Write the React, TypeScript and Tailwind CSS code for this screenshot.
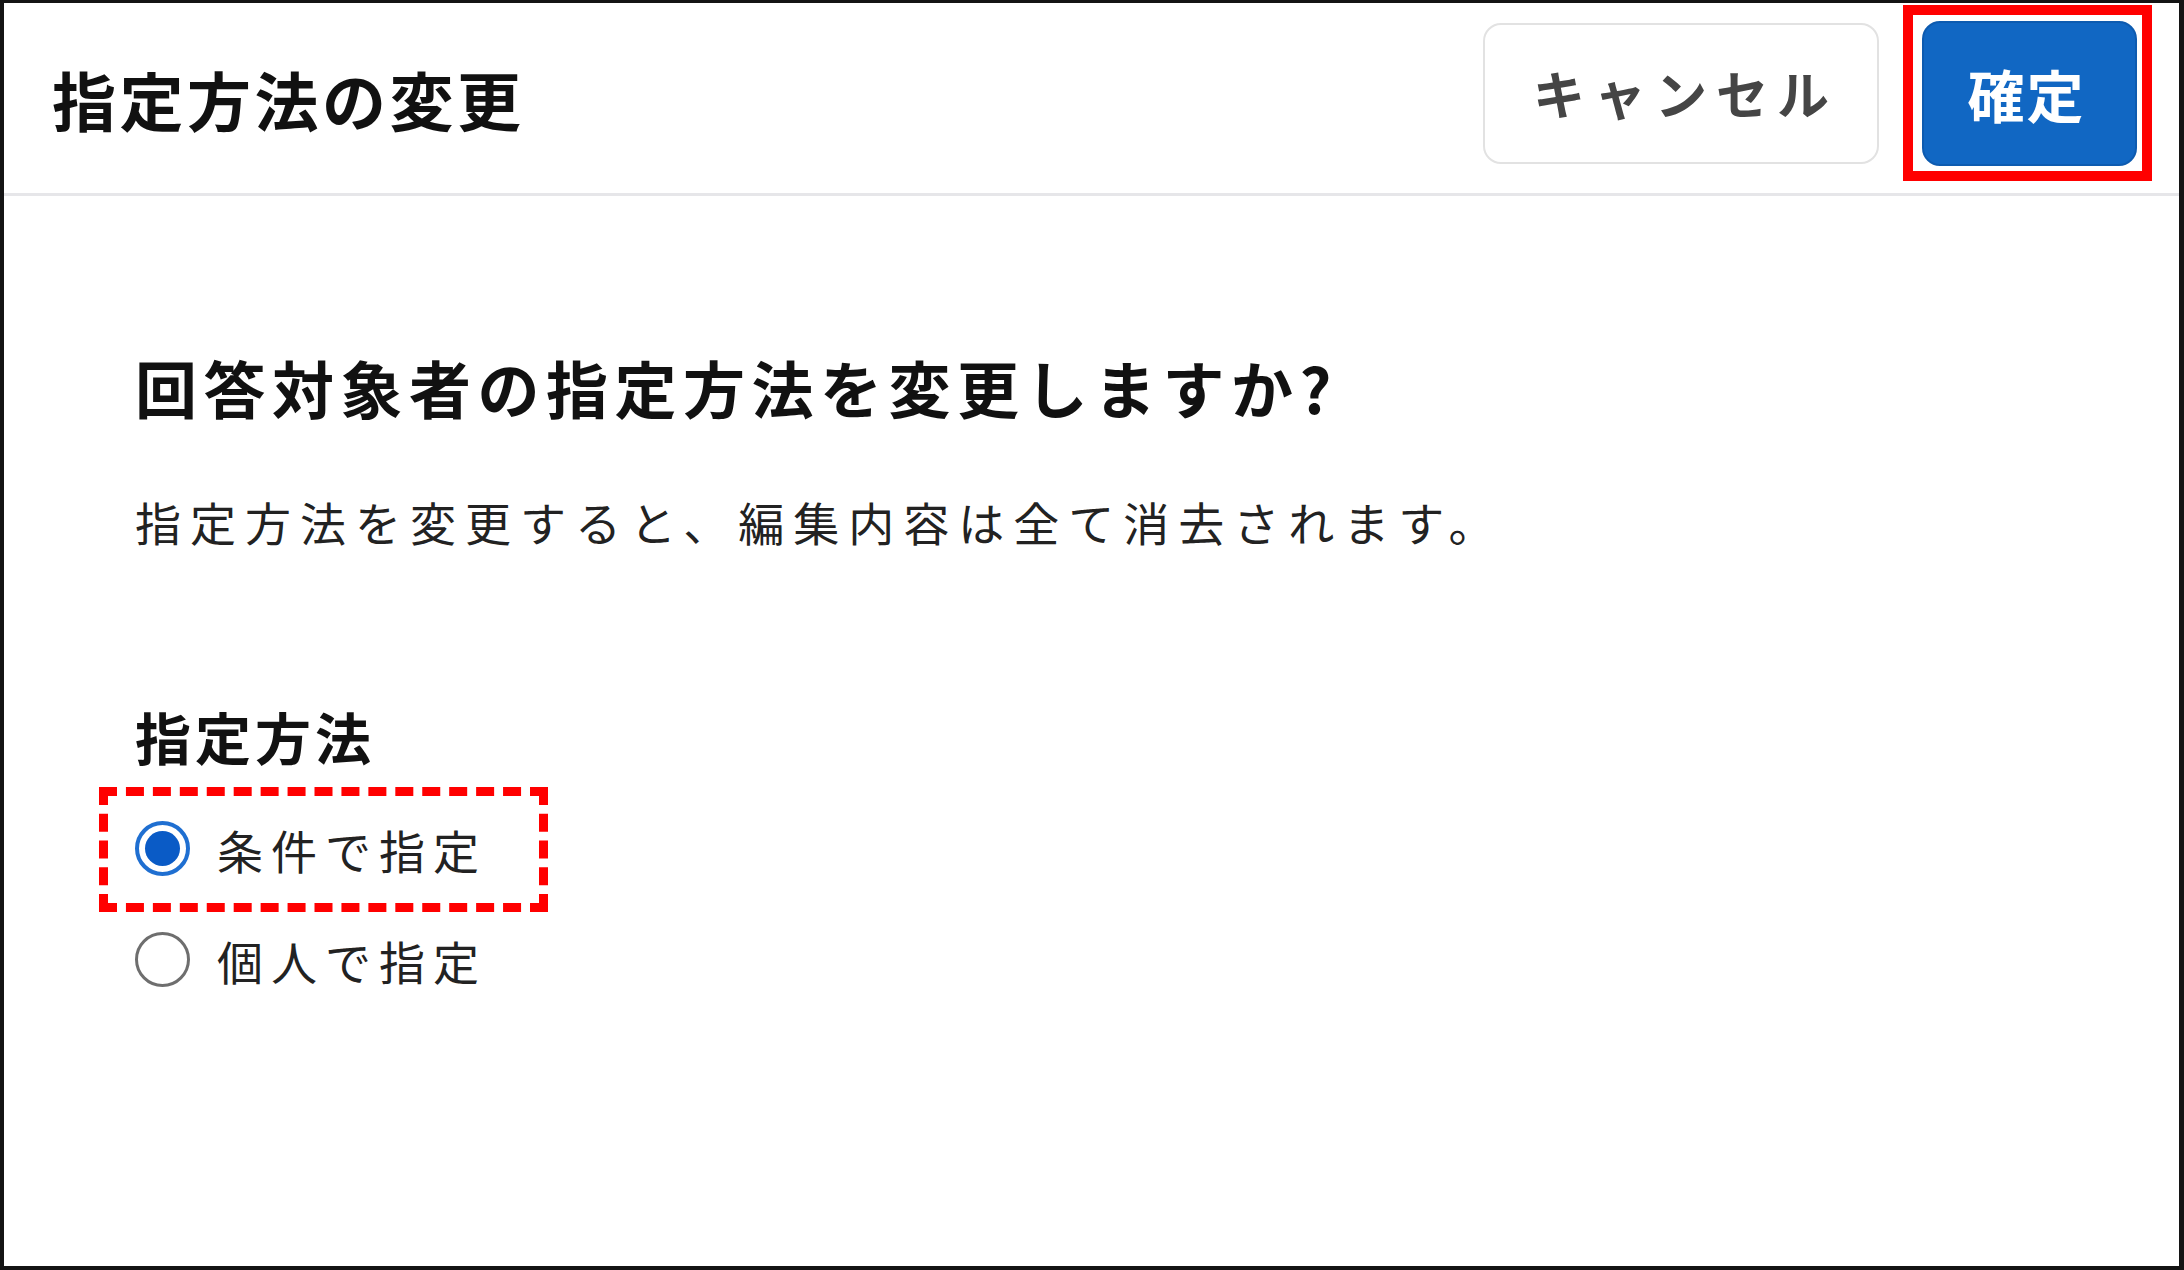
const jp = "font-['Noto_Sans_CJK_JP','Noto_Sans',sans-serif]";

function Radio({ checked, label }: { checked?: boolean; label: string }) {
  return (
    <label className="flex items-center gap-[27px] h-[55px] cursor-pointer">
      {checked ? (
        <span className="w-[55px] h-[55px] rounded-full border-[4px] border-[#1f6fd1] flex items-center justify-center">
          <span className="w-[35px] h-[35px] rounded-full bg-[#0a5bc6]" />
        </span>
      ) : (
        <span className="w-[55px] h-[55px] rounded-full border-[3px] border-[#6e6e6e]" />
      )}
      <span className="text-[46px] leading-none tracking-[8px] text-[#222]">{label}</span>
    </label>
  );
}

export default function App() {
  return (
    <div
      className={`w-[2184px] h-[1270px] bg-white border-[4px] border-t-[3px] border-r-[5px] border-[#141414] flex flex-col ${jp}`}
    >
      <header className="h-[193px] shrink-0 flex items-center justify-between pl-[48px] pr-[42px] border-b-[3px] border-[#e6e6e9]">
        <h1 className="text-[64px] font-bold leading-none tracking-[3.5px] text-[#111]">指定方法の変更</h1>
        <div className="flex items-center gap-[43px] mb-[10px]">
          <button className="w-[396px] h-[141px] rounded-[18px] border-2 border-[#e2e2e2] bg-white text-[52px] font-bold leading-none tracking-[9px] text-[#454545] pl-[9px]">
            キャンセル
          </button>
          <div className="relative">
            <button className="w-[215px] h-[145px] rounded-[18px] bg-[#1167c3] border-2 border-[#0d5bb0] text-[57px] font-bold leading-none tracking-[2px] text-white pr-[6px]">
              確定
            </button>
            <div className="absolute -top-[16px] -bottom-[15px] -left-[19px] -right-[15px] border-[10px] border-[#ff0000] pointer-events-none" />
          </div>
        </div>
      </header>

      <main className="flex flex-col pl-[131px] pt-[160px]">
        <h2 className="text-[62px] font-bold leading-none tracking-[6.5px] text-[#111]">回答対象者の指定方法を変更しますか?</h2>
        <p className="mt-[80px] text-[46px] leading-none tracking-[9px] text-[#222]">
          指定方法を変更すると、編集内容は全て消去されます。
        </p>

        <h3 className="mt-[164px] text-[56px] font-bold leading-none tracking-[4px] text-[#111]">指定方法</h3>

        <div className="mt-[57px] relative">
          <Radio checked label="条件で指定" />
          <div className="absolute -left-[36px] -top-[34px] w-[449px] h-[125px] border-[9px] border-dashed border-[#ff0000] pointer-events-none" />
        </div>
        <div className="mt-[56px]">
          <Radio label="個人で指定" />
        </div>
      </main>
    </div>
  );
}
